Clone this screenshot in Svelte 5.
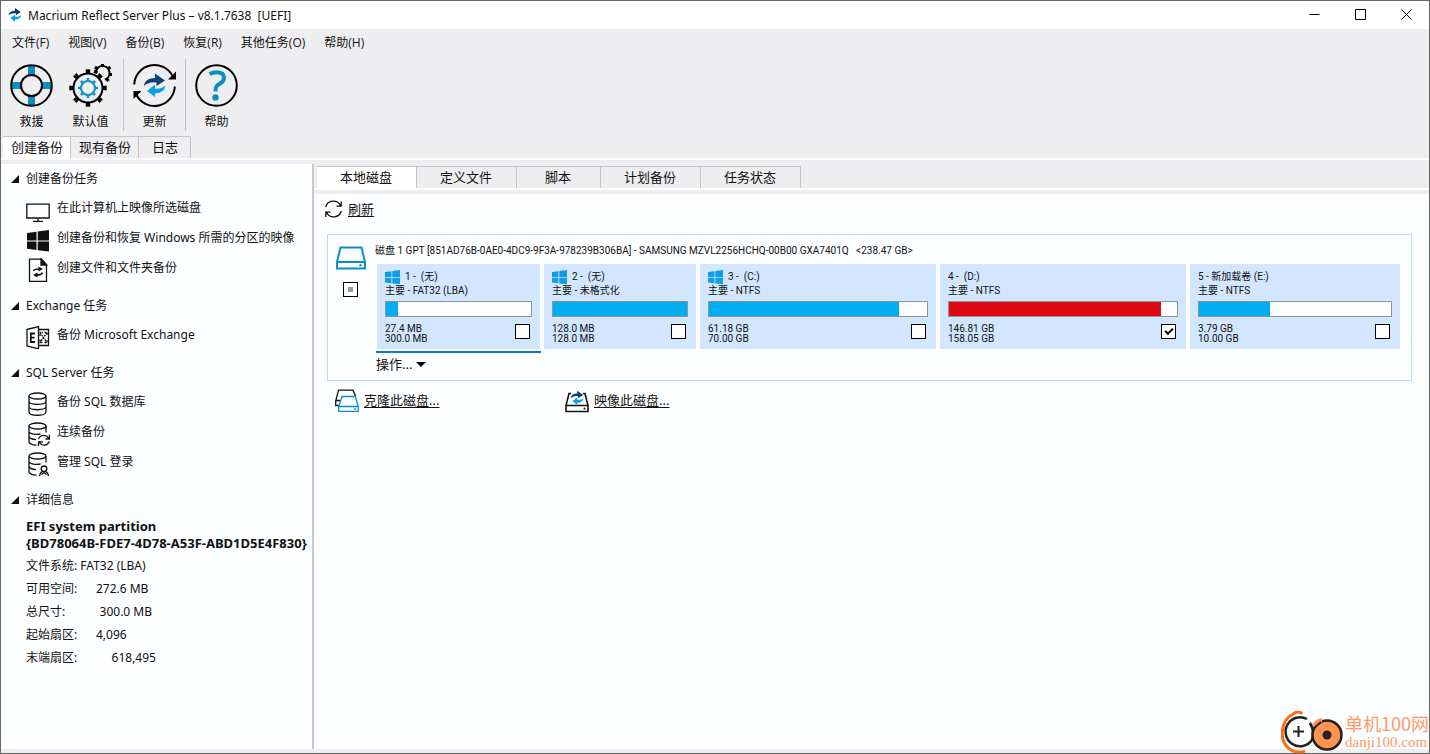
<script lang="ts">
    type Partition = {
        title: string;
        kind: string;
        used: string;
        total: string;
        fill: number;
        size: number;
        windows?: boolean;
        full?: boolean;
        checked?: boolean;
    };

    const menus = ["文件(F)", "视图(V)", "备份(B)", "恢复(R)", "其他任务(O)", "帮助(H)"];
    const side_tabs = ["创建备份", "现有备份", "日志"];
    const main_tabs = ["本地磁盘", "定义文件", "脚本", "计划备份", "任务状态"];

    const sections = [
        {
            title: "创建备份任务",
            items: [
                { icon: "monitor", label: "在此计算机上映像所选磁盘" },
                { icon: "windows", label: "创建备份和恢复 Windows 所需的分区的映像" },
                { icon: "file", label: "创建文件和文件夹备份" },
            ],
        },
        {
            title: "Exchange 任务",
            items: [{ icon: "exchange", label: "备份 Microsoft Exchange" }],
        },
        {
            title: "SQL Server 任务",
            items: [
                { icon: "db", label: "备份 SQL 数据库" },
                { icon: "db-sync", label: "连续备份" },
                { icon: "db-user", label: "管理 SQL 登录" },
            ],
        },
    ];

    const details = [
        "文件系统: FAT32 (LBA)",
        "可用空间:      272.6 MB",
        "总尺寸:           300.0 MB",
        "起始扇区:      4,096",
        "末端扇区:           618,495",
    ];

    let partitions: Partition[] = $state([
        { title: "1 -  (无)", kind: "主要 - FAT32 (LBA)", used: "27.4 MB", total: "300.0 MB", fill: 8, size: 163, windows: true },
        { title: "2 -  (无)", kind: "主要 - 未格式化", used: "128.0 MB", total: "128.0 MB", fill: 100, size: 152, windows: true },
        { title: "3 -  (C:)", kind: "主要 - NTFS", used: "61.18 GB", total: "70.00 GB", fill: 87, size: 236, windows: true },
        { title: "4 -  (D:)", kind: "主要 - NTFS", used: "146.81 GB", total: "158.05 GB", fill: 93, size: 246, full: true, checked: true },
        { title: "5 - 新加载卷 (E:)", kind: "主要 - NTFS", used: "3.79 GB", total: "10.00 GB", fill: 37, size: 210 },
    ]);

    let side_tab = $state(0);
    let main_tab = $state(0);
    let selected = $state(0);
</script>

{#snippet swirl()}
    <path fill="#0b3f73" d="M11 22Q12 14 22 14V9.500L32 16.500 23.500 22V18.500Q16 17.500 11 22Z" />
    <path fill="#0c9fe6" d="M32.500 21.500Q31.500 29 22 29.500V33L14 27 22 20.500V24.500Q28 25.500 32.500 21.500Z" />
{/snippet}

{#snippet winlogo()}
    <path d="M0 3 9.500 1.700V10.500H0ZM10.700 1.500 22 0V10.500H10.700ZM0 11.600H9.500V20L0 18.800ZM10.700 11.600H22V21.500L10.700 20.200Z" />
{/snippet}

{#snippet task_icon(name: string)}
    <svg class="task-icon" viewBox="0 0 24 24" fill="none" stroke="#111" stroke-width="1.3">
        {#if name == "monitor"}
            <path d="M.8 6.200H23.200V20H.8ZM7 23.300H17M12 20V23" />
        {:else if name == "windows"}
            <g transform="translate(1 2)" fill="#111" stroke="none">{@render winlogo()}</g>
        {:else if name == "file"}
            <path d="M3.500 1.200H15.500L20.500 6.500V23.300H3.500Z" />
            <path d="M15 1V7H20.500Z" fill="#111" />
            <path d="M7.500 13Q8 10.800 13.500 11M16.500 14.500Q16 17 10.500 17" stroke-width="1.500" />
            <path d="M12.500 8.500 17 11 12.500 13.500ZM11.500 14.500V19.500L7 17Z" fill="#111" stroke="none" />
        {:else if name == "exchange"}
            <path d="M1 4.500 12.500 1.500V23.800L1 21Z" />
            <path d="M12.500 4.500H22.500V20.500H12.500" />
            <path d="M9 8.500H4.800V17H9M4.800 12.700H8.500" stroke-width="1.800" />
            <path d="M14 7.500 21 17.500M21 7.500 14 17.500M14 11V7.500H17M18.500 7.500H21V10.500M14 14.500V17.500H17M18.500 17.500H21V14.500" stroke-dasharray="2 .8" />
        {:else}
            <ellipse cx="11.500" cy="4" rx="8.500" ry="3" />
            {#if name == "db"}
                <path d="M3 4V20C3 24.300 20 24.300 20 20V4M3 9.300C3 13.500 20 13.500 20 9.300M3 14.600C3 18.800 20 18.800 20 14.600" />
            {:else}
                <path d="M20 4V10.500M3 4V20Q4 22.800 10.500 23.200M3 9.300C3 12.500 11 12.800 14.500 12M3 14.600Q4 17.300 10 17.700" />
            {/if}
            {#if name == "db-sync"}
                <path d="M12.500 17Q15 11.800 20.500 14L23 16.500M23.500 19.500Q20 24.700 15.500 22.500L13.500 20.500M23.500 12.500V17H19.500M12.500 24V19.800H17" />
            {:else if name == "db-user"}
                <circle cx="18" cy="16.800" r="2.800" />
                <path d="M13.500 24Q14 20.500 16.500 19.500M22.500 24Q22 20.500 19.500 19.500M15.500 22.500 18 20.500 20.500 22.500" />
            {/if}
        {/if}
    </svg>
{/snippet}

<div class="window">
    <header class="titlebar">
        <svg width="14" height="16" viewBox="10 8 24 27">{@render swirl()}</svg>
        <h1>Macrium Reflect Server Plus – v8.1.7638&nbsp; [UEFI]</h1>
        <div class="window-buttons">
            <button aria-label="最小化"><svg viewBox="0 0 11 11"><path d="M.5 5.500H10.500" /></svg></button>
            <button aria-label="最大化"><svg viewBox="0 0 11 11"><path d="M.5 .5H10.500V10.500H.5Z" /></svg></button>
            <button aria-label="关闭"><svg viewBox="0 0 11 11"><path d="M.5 .5 10.500 10.500M10.500 .5 .5 10.500" /></svg></button>
        </div>
    </header>

    <nav class="menubar">
        {#each menus as menu}
            <button>{menu}</button>
        {/each}
    </nav>

    <div class="toolbar">
        <button>
            <svg viewBox="0 0 43 43" fill="none" stroke="#000" stroke-width="2">
                <path d="M21.500 1V11M21.500 32V42M1 21.500H11M32 21.500H42" stroke="#0b8fc0" stroke-width="7" />
                <circle cx="21.500" cy="21.500" r="20.300" />
                <circle cx="21.500" cy="21.500" r="10.500" />
            </svg>
            救援
        </button>
        <button class="wide">
            <svg viewBox="0 0 43 43" fill="none" stroke="#000" stroke-width="2">
                <circle cx="19" cy="24" r="14.500" />
                <circle cx="19" cy="24" r="16.500" stroke-width="4.500" pathLength="80" stroke-dasharray="3.400 6.600" stroke-dashoffset="1.700" />
                <g stroke="#0b8fc0">
                    <circle cx="19" cy="24" r="7" />
                    <circle cx="19" cy="24" r="8.500" stroke-width="3" pathLength="80" stroke-dasharray="3.600 6.400" stroke-dashoffset="1.800" />
                </g>
                <path d="M26.600 8A7 7 0 1 1 36 15.600" />
                <path d="M33.500 0V3M26 3 29 5.500M41.500 3 38.500 5M43 10.500H40M39.500 17 37 14M25 7.500 28.500 8.500" stroke-width="3" />
            </svg>
            默认值
        </button>
        <span class="separator"></span>
        <button>
            <svg viewBox="0 0 43 43" fill="none" stroke="#000" stroke-width="2">
                <path d="M1.200 20.500A20.300 20.300 0 0 1 39.500 12M41.800 22.500A20.300 20.300 0 0 1 3.500 31" />
                <path d="M43 7.500V15.500H35ZM.5 35V27H8.500Z" fill="#000" stroke="none" />
                <g stroke="none">{@render swirl()}</g>
            </svg>
            更新
        </button>
        <span class="separator"></span>
        <button>
            <svg viewBox="0 0 43 43" fill="none" stroke="#000" stroke-width="2">
                <circle cx="21.500" cy="21.500" r="20.300" />
                <path d="M14.500 10Q18 8.300 21.500 8.300C31 8.300 30.500 16.500 25 19.500 21.500 21.500 20.500 23 20.500 27.500" stroke="#0b8fc0" stroke-width="4" />
                <circle cx="20.500" cy="33.500" r="3.200" fill="#0b8fc0" stroke="none" />
            </svg>
            帮助
        </button>
    </div>

    <div class="tabs side-tabs" role="tablist">
        {#each side_tabs as tab, i}
            <button role="tab" aria-selected={i == side_tab} class:active={i == side_tab} onclick={() => (side_tab = i)}>
                {tab}
            </button>
        {/each}
    </div>

    <div class="body">
        <aside>
            {#each sections as section}
                <section>
                    <h2>{section.title}</h2>
                    {#each section.items as item}
                        <button class="task">
                            {@render task_icon(item.icon)}
                            <span>{item.label}</span>
                        </button>
                    {/each}
                </section>
            {/each}
            <section>
                <h2>详细信息</h2>
                <div class="details">
                    <strong>EFI system partition<br />{"{BD78064B-FDE7-4D78-A53F-ABD1D5E4F830}"}</strong>
                    {#each details as line}
                        <p>{line}</p>
                    {/each}
                </div>
            </section>
        </aside>

        <main>
            <div class="tabs main-tabs" role="tablist">
                {#each main_tabs as tab, i}
                    <button role="tab" aria-selected={i == main_tab} class:active={i == main_tab} onclick={() => (main_tab = i)}>
                        {tab}
                    </button>
                {/each}
            </div>

            <div class="panel">
                <a class="refresh" href="#refresh">
                    <svg width="17" height="18" viewBox="0 0 17 18" fill="none" stroke="#111" stroke-width="1.300">
                        <path d="M.7 7A8 8 0 0 1 15.500 5.500M16.300 11A8 8 0 0 1 1.500 12.500M16.200 1.500V6.200H11.500M.8 17V12.200H5.500" />
                    </svg>
                    <span>刷新</span>
                </a>

                <section class="disk">
                    <div class="disk-side">
                        <svg width="30" height="24" viewBox="0 0 30 24" fill="none" stroke="#0b8fc0" stroke-width="2">
                            <path d="M1 16 4.500 1.500H25.500L29 16V22.500H1ZM1 16H29" />
                            <circle cx="24.500" cy="19.300" r="1.200" fill="#0b8fc0" stroke="none" />
                        </svg>
                        <input type="checkbox" class="partial" aria-label="磁盘 1" />
                    </div>
                    <div class="disk-main">
                        <h3>磁盘 1 GPT [851AD76B-0AE0-4DC9-9F3A-978239B306BA] - SAMSUNG MZVL2256HCHQ-00B00 GXA7401Q&nbsp;&nbsp; &lt;238.47 GB&gt;</h3>
                        <div class="partitions">
                            {#each partitions as part, i}
                                <div class="slot" class:selected={i == selected} style="flex-grow: {part.size}">
                                    <div class="partition">
                                        <div class="name">
                                            {#if part.windows}
                                                <svg width="15" height="14" viewBox="0 0 22 21" fill="#0c9fe6" preserveAspectRatio="none">{@render winlogo()}</svg>
                                            {/if}
                                            <span>{part.title}</span>
                                        </div>
                                        <div>{part.kind}</div>
                                        <div class="bar"><div class:full={part.full} style="width: {part.fill}%"></div></div>
                                        <div class="usage">
                                            <span>{part.used}<br />{part.total}</span>
                                            <input type="checkbox" bind:checked={part.checked} aria-label={part.title} />
                                        </div>
                                    </div>
                                </div>
                            {/each}
                        </div>
                        <button class="actions">
                            操作...
                            <svg width="10" height="5" viewBox="0 0 10 5"><path d="M0 0H10L5 5Z" /></svg>
                        </button>
                    </div>
                </section>

                <div class="links">
                    <a href="#clone">
                        <svg width="24" height="24" viewBox="0 0 24 24" fill="none" stroke-width="1.300">
                            <path d="M4.500 16.500H.7V12L3.500 1.200H18L20.500 7M.7 11.500H5" stroke="#111" />
                            <path d="M3.700 17.500 7 7.500H20.300L23.300 17.500V22.300H3.700ZM3.700 17.500H23.300M19 20H21" stroke="#0b8fc0" />
                        </svg>
                        <span>克隆此磁盘...</span>
                    </a>
                    <a href="#image">
                        <svg width="24" height="24" viewBox="0 0 24 24" fill="none" stroke="#111" stroke-width="1.600">
                            <path d="M6 4.500H4L1 16.500V22.500H23V16.500L20 4.500H18M1 16.500H23" />
                            <circle cx="19.500" cy="19.500" r="1" fill="#111" stroke="none" />
                            <g transform="translate(-1 -4) scale(.6)" stroke="none">{@render swirl()}</g>
                        </svg>
                        <span>映像此磁盘...</span>
                    </a>
                </div>
            </div>
        </main>
    </div>

    <div class="watermark">
        <svg width="63" height="42" viewBox="0 0 63 42" fill="none">
            <path d="M21 3Q18-1 12 3C-1 10-3 31 10 39Q18 43 24 40" stroke="#ff6c12" stroke-width="3" />
            <path d="M26 8A14.500 14.500 0 1 0 31 29C33 23 32 17 29 12" stroke="#222" stroke-width="2.500" />
            <circle cx="46" cy="24" r="14.500" fill="#ff9350" stroke="#222" stroke-width="2.500" />
            <path d="M32 15Q36 10 41 9" stroke="#ff9350" stroke-width="4" />
            <path d="M29 12 32 18 40 11" stroke="#222" stroke-width="2" />
            <circle cx="46" cy="24" r="4.500" fill="#222" />
            <path d="M12 20.500H23M17.500 15V26" stroke="#222" stroke-width="2" />
        </svg>
        <div>
            <span class="cn">单机100网</span>
            <span class="url">danji100.com</span>
        </div>
    </div>
</div>

<style>
    :global(body) {
        margin: 0;
    }

    .window {
        position: relative;
        box-sizing: border-box;
        min-height: 100vh;
        display: flex;
        flex-direction: column;
        padding-bottom: 4px;

        background-color: #eeeef0;
        border: 1px solid #666;
        color: #111;
        font-family: "Noto Sans", "Noto Sans CJK SC", sans-serif;
        font-size: 12px;
    }

    button {
        padding: 0;
        border: none;
        background: none;
        color: inherit;
        font: inherit;
    }

    h1,
    h2,
    h3,
    p {
        margin: 0;
        font-size: inherit;
        font-weight: normal;
    }

    a {
        color: inherit;
        text-decoration: none;
    }

    a span {
        text-decoration: underline;
        text-underline-offset: 2px;
    }

    svg {
        display: block;
        flex: none;
    }

    .titlebar {
        display: flex;
        align-items: center;
        gap: 6px;
        height: 28px;
        padding-left: 7px;
        background-color: #fff;
    }

    .window-buttons {
        display: flex;
        align-self: flex-start;
        margin-left: auto;
    }

    .window-buttons button {
        display: grid;
        place-content: center;
        width: 46px;
        height: 26px;
    }

    .window-buttons svg {
        width: 11px;
        height: 11px;
        stroke: #000;
        fill: none;
    }

    .menubar {
        display: flex;
        gap: 19px;
        padding: 4px 11px 0;
        font-family: "Open Sans", "Noto Sans CJK SC", sans-serif;
        line-height: 20px;
    }

    .toolbar {
        display: flex;
        padding: 6px 2px 0;
        height: 77px;
    }

    .toolbar button {
        display: flex;
        flex-direction: column;
        align-items: center;
        width: 57px;
        padding-top: 5px;
        line-height: 30px;
    }

    .toolbar .wide {
        width: 61px;
    }

    .toolbar svg {
        width: 43px;
        height: 43px;
    }

    .separator {
        width: 1px;
        height: 72px;
        margin: 0 2px;
        background-color: #c4c4c6;
    }

    .tabs {
        display: flex;
        font-size: 13px;
        border-bottom: 2px solid #fff;
    }

    .tabs button {
        height: 22px;
        padding: 0 24px 2px 23px;
        border-top: 1px solid #c4c4c6;
        border-right: 1px solid #c4c4c6;
        line-height: 18px;
    }

    .tabs .active {
        background-color: #fff;
    }

    .side-tabs {
        padding-left: 2px;
    }

    .side-tabs button {
        padding: 0 7px 2px 8px;
    }

    .side-tabs button:last-child {
        padding: 0 12px 2px 13px;
    }

    .body {
        flex: 1;
        display: flex;
        margin-top: 4px;
    }

    aside {
        box-sizing: border-box;
        width: 313px;
        flex: none;
        padding-top: 1px;
        background-color: #fdfeff;
        border-right: 2px solid #c8c8ca;
    }

    section + section {
        margin-top: 9px;
    }

    h2 {
        display: flex;
        align-items: center;
        gap: 7px;
        padding-left: 10px;
        line-height: 28px;
    }

    h2::before {
        content: "";
        border-left: 8px solid transparent;
        border-bottom: 8px solid #111;
    }

    .task {
        display: flex;
        gap: 7px;
        padding-left: 25px;
        line-height: 30px;
        white-space: nowrap;
    }

    .task-icon {
        width: 24px;
        height: 24px;
        margin-top: 5px;
    }

    .details {
        padding: 4px 0 0 25px;
        white-space: nowrap;
    }

    .details strong {
        display: block;
        margin-bottom: 2px;
        font-size: 13px;
        line-height: 17px;
    }

    .details p {
        line-height: 23px;
        white-space: pre;
    }

    main {
        flex: 1;
        min-width: 0;
        display: flex;
        flex-direction: column;
    }

    .main-tabs {
        padding: 2px 0 0 3px;
    }

    .main-tabs button:nth-child(3) {
        padding: 0 29px 2px 28px;
    }

    .panel {
        flex: 1;
        margin-top: 4px;
        padding: 6px 17px 0 13px;
        background-color: #fdfeff;
        font-size: 13px;
    }

    .refresh {
        display: flex;
        align-items: center;
        gap: 6px;
        width: fit-content;
        margin-left: -2px;
        line-height: 18px;
    }

    .disk {
        display: flex;
        gap: 9px;
        margin-top: 16px;
        padding: 9px 10px 5px 8px;
        border: 1px solid #bddcf2;
    }

    .disk-side {
        display: flex;
        flex-direction: column;
        gap: 12px;
        padding-top: 2px;
    }

    .disk-side input {
        margin-left: 7px;
    }

    .disk-main {
        flex: 1;
        min-width: 0;
    }

    h3,
    .partitions {
        font-family: Roboto, "Noto Sans CJK SC", sans-serif;
        font-size: 10px;
        line-height: 14px;
    }

    .partitions {
        display: flex;
        gap: 2px;
        margin-top: 6px;
        padding-left: 1px;
    }

    .slot {
        flex-basis: 0;
        padding: 0 1px 2px;
        border-bottom: 2px solid transparent;
    }

    .slot.selected {
        border-color: #0a78d6;
    }

    .partition {
        padding: 6px 8px 5px;
        background-color: #d2e7ff;
        white-space: nowrap;
    }

    .name {
        display: flex;
        gap: 5px;
    }

    .name span {
        white-space: pre;
    }

    .bar {
        height: 14px;
        margin: 3px 0 7px;
        border: 1px solid #8c9698;
        background-color: #fff;
    }

    .bar div {
        height: 100%;
        background-color: #00adef;
    }

    .bar .full {
        background-color: #dd0a14;
    }

    .usage {
        display: flex;
        justify-content: space-between;
        align-items: flex-start;
        padding-right: 2px;
        line-height: 10px;
    }

    input {
        appearance: none;
        display: grid;
        place-content: center;
        box-sizing: border-box;
        width: 15px;
        height: 15px;
        margin: 0;
        border: 1px solid #000;
        background-color: #fff;
    }

    .usage input {
        margin-bottom: 5px;
    }

    input.partial::before {
        content: "";
        width: 5px;
        height: 5px;
        background-color: #929b9b;
    }

    input:checked::before {
        content: "";
        width: 6px;
        height: 3px;
        margin-bottom: 3px;
        border: solid #000;
        border-width: 0 0 2px 2px;
        background: none;
        transform: rotate(-45deg);
    }

    .actions {
        display: flex;
        align-items: center;
        gap: 4px;
        padding-left: 1px;
        line-height: 22px;
    }

    .links {
        display: flex;
        padding: 8px 0 0 8px;
    }

    .links a {
        display: flex;
        gap: 5px;
        width: 230px;
        line-height: 22px;
    }

    .watermark {
        position: absolute;
        right: 0;
        bottom: 0;
        display: flex;
        align-items: center;
        gap: 1px;
        color: #ff9a68;
        pointer-events: none;
    }

    .watermark span {
        display: block;
    }

    .cn {
        font-family: "Noto Sans CJK SC", sans-serif;
        font-size: 18px;
        line-height: 20px;
    }

    .url {
        font-family: "Liberation Serif", serif;
        font-size: 15px;
        line-height: 18px;
    }
</style>
